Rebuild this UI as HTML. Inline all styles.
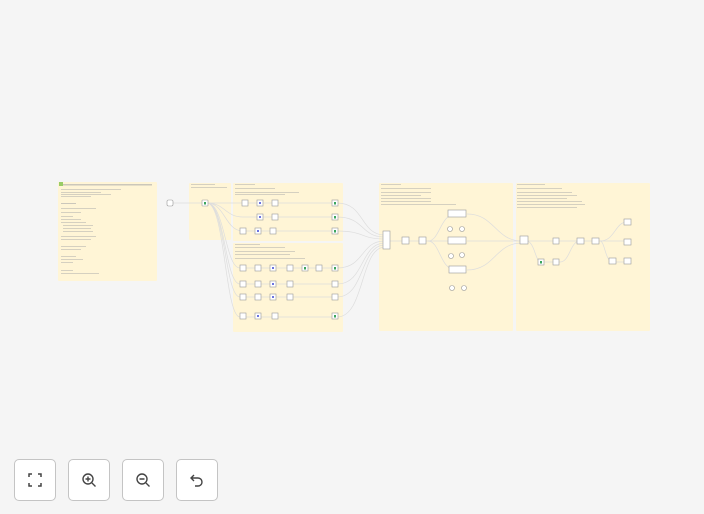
<!DOCTYPE html>
<html><head><style>
html,body{margin:0;padding:0;width:704px;height:514px;overflow:hidden;background:#f5f5f5;font-family:"Liberation Sans",sans-serif}
.btn{position:absolute;top:459px;width:42px;height:42px;border:1px solid #c4c4c4;border-radius:5px;background:#fff;box-sizing:border-box;display:flex;align-items:center;justify-content:center}
</style></head><body>
<svg width="704" height="514" style="position:absolute;left:0;top:0">
<g fill="#fff5d6">
<rect x="58" y="182" width="99" height="99" rx="1"/>
<rect x="189" y="183" width="42" height="57" rx="1"/>
<rect x="233" y="183" width="110" height="58" rx="1"/>
<rect x="233" y="243" width="110" height="89" rx="1"/>
<rect x="379" y="183" width="134" height="148" rx="1"/>
<rect x="516" y="183" width="134" height="148" rx="1"/>
</g>
<g fill="#aaa" opacity=".6">
<rect x="63" y="184" width="89" height="1.5"/>
<rect x="61" y="189" width="60" height=".8"/><rect x="61" y="192" width="40" height=".8"/><rect x="61" y="194" width="50" height=".8"/><rect x="61" y="196" width="30" height=".8"/>
<rect x="61" y="203" width="15" height="1"/><rect x="61" y="208" width="35" height=".8"/>
<rect x="61" y="212" width="20" height=".8"/><rect x="61" y="216" width="12" height=".8"/><rect x="61" y="219" width="20" height=".8"/><rect x="61" y="222" width="25" height=".8"/><rect x="63" y="225" width="30" height=".8"/><rect x="63" y="228" width="28" height=".8"/><rect x="63" y="231" width="30" height=".8"/>
<rect x="61" y="236" width="35" height=".8"/><rect x="61" y="239" width="30" height=".8"/>
<rect x="61" y="246" width="25" height=".8"/><rect x="61" y="249" width="20" height=".8"/>
<rect x="61" y="256" width="15" height=".8"/><rect x="61" y="259" width="22" height=".8"/><rect x="61" y="262" width="12" height=".8"/>
<rect x="61" y="270" width="12" height=".8"/><rect x="61" y="273" width="38" height=".8"/>
<rect x="191" y="184" width="24" height=".8"/><rect x="191" y="187" width="36" height=".8"/>
<rect x="235" y="184" width="20" height=".8"/><rect x="235" y="188" width="40" height=".8"/><rect x="235" y="192" width="64" height=".8"/><rect x="235" y="194" width="50" height=".8"/>
<rect x="235" y="244" width="25" height=".8"/><rect x="235" y="247" width="50" height=".8"/><rect x="235" y="251" width="60" height=".8"/><rect x="235" y="254" width="55" height=".8"/><rect x="235" y="258" width="70" height=".8"/>
<rect x="381" y="184" width="20" height=".8"/><rect x="381" y="188" width="50" height=".8"/><rect x="381" y="192" width="50" height=".8"/><rect x="381" y="195" width="40" height=".8"/><rect x="381" y="198" width="50" height=".8"/><rect x="381" y="201" width="50" height=".8"/><rect x="381" y="204" width="75" height=".8"/>
<rect x="517" y="184" width="28" height=".8"/><rect x="517" y="188" width="45" height=".8"/><rect x="517" y="192" width="55" height=".8"/><rect x="517" y="195" width="60" height=".8"/><rect x="517" y="198" width="50" height=".8"/><rect x="517" y="201" width="65" height=".8"/><rect x="517" y="204" width="68" height=".8"/><rect x="517" y="207" width="60" height=".8"/>
</g>
<g fill="none" stroke="#ddd" stroke-width=".7">
<path d="M173 203H203"/>
<path d="M207 203C225 203 225 203 243 203H333"/>
<path d="M207 203C225 203 225 217 243 217H333"/>
<path d="M207 203C225 203 225 231 243 231H333"/>
<path d="M207 203C225 203 225 268 240 268H333"/>
<path d="M207 203C225 203 225 284 240 284H333"/>
<path d="M207 203C225 203 225 297 240 297H333"/>
<path d="M207 203C225 203 225 317 240 317H333"/>
<path d="M337 203C365 203 360 235 385 235"/><path d="M337 217C365 217 360 237 385 237"/><path d="M337 231C365 231 360 239 385 239"/>
<path d="M337 268C365 268 360 241 385 241"/><path d="M337 284C365 284 360 243 385 243"/><path d="M337 297C365 297 360 245 385 245"/><path d="M337 317C365 317 360 247 385 247"/>
<path d="M390 241H456"/><path d="M428 241C440 241 440 214 456 214"/><path d="M428 241C440 241 440 270 456 270"/>
<path d="M467 214C495 214 495 241 522 241"/><path d="M467 241H522"/><path d="M467 270C495 270 495 243 522 243"/>
<path d="M526 241H627"/><path d="M526 241C535 241 535 262 541 262H560"/><path d="M560 262C570 262 570 241 580 241"/>
<path d="M600 241C615 241 615 222 627 222"/><path d="M600 241C605 241 605 262 613 262H627"/>
</g>
<g fill="#fff" stroke="#999" stroke-width=".6">
<rect x="167" y="200" width="6" height="6" rx="1.5"/>
<rect x="202" y="200" width="6" height="6" rx=".5"/>
<rect x="242" y="200" width="6" height="6"/><rect x="257" y="200" width="6" height="6"/><rect x="272" y="200" width="6" height="6"/><rect x="332" y="200" width="6" height="6"/>
<rect x="257" y="214" width="6" height="6"/><rect x="272" y="214" width="6" height="6"/><rect x="332" y="214" width="6" height="6"/>
<rect x="240" y="228" width="6" height="6"/><rect x="255" y="228" width="6" height="6"/><rect x="270" y="228" width="6" height="6"/><rect x="332" y="228" width="6" height="6"/>
<rect x="240" y="265" width="6" height="6"/><rect x="255" y="265" width="6" height="6"/><rect x="270" y="265" width="6" height="6"/><rect x="287" y="265" width="6" height="6"/><rect x="302" y="265" width="6" height="6"/><rect x="316" y="265" width="6" height="6"/><rect x="332" y="265" width="6" height="6"/>
<rect x="240" y="281" width="6" height="6"/><rect x="255" y="281" width="6" height="6"/><rect x="270" y="281" width="6" height="6"/><rect x="287" y="281" width="6" height="6"/><rect x="332" y="281" width="6" height="6"/>
<rect x="240" y="294" width="6" height="6"/><rect x="255" y="294" width="6" height="6"/><rect x="270" y="294" width="6" height="6"/><rect x="287" y="294" width="6" height="6"/><rect x="332" y="294" width="6" height="6"/>
<rect x="240" y="313" width="6" height="6"/><rect x="255" y="313" width="6" height="6"/><rect x="272" y="313" width="6" height="6"/><rect x="332" y="313" width="6" height="6"/>
<rect x="383" y="231" width="7" height="18"/>
<rect x="402" y="237" width="7" height="7"/><rect x="419" y="237" width="7" height="7"/>
<rect x="448" y="210" width="18" height="7"/><rect x="448" y="237" width="18" height="7"/><rect x="449" y="266" width="17" height="7"/>
<circle cx="450" cy="229" r="2.5"/><circle cx="462" cy="229" r="2.5"/><circle cx="451" cy="256" r="2.5"/><circle cx="462" cy="255" r="2.5"/><circle cx="452" cy="288" r="2.5"/><circle cx="464" cy="288" r="2.5"/>
<rect x="520" y="236" width="8" height="8"/><rect x="553" y="238" width="6" height="6"/><rect x="538" y="259" width="6" height="6"/><rect x="553" y="259" width="6" height="6"/>
<rect x="577" y="238" width="7" height="6"/><rect x="592" y="238" width="7" height="6"/><rect x="609" y="258" width="7" height="6"/>
<rect x="624" y="219" width="7" height="6"/><rect x="624" y="239" width="7" height="6"/><rect x="624" y="258" width="7" height="6"/>
</g>
<g fill="#3aa55d"><rect x="204" y="202" width="2" height="2.5"/><rect x="334" y="202" width="2" height="2.5"/><rect x="334" y="216" width="2" height="2.5"/><rect x="334" y="230" width="2" height="2.5"/><rect x="304" y="267" width="2" height="2.5"/><rect x="334" y="267" width="2" height="2.5"/><rect x="334" y="315" width="2" height="2.5"/><rect x="540" y="261" width="2" height="2.5"/></g>
<g fill="#6b74e0"><rect x="259" y="202" width="2" height="2"/><rect x="259" y="216" width="2" height="2"/><rect x="257" y="230" width="2" height="2"/><rect x="272" y="267" width="2" height="2"/><rect x="272" y="283" width="2" height="2"/><rect x="272" y="296" width="2" height="2"/><rect x="257" y="315" width="2" height="2"/></g>
<rect x="59" y="182" width="4" height="4" fill="#9c6"/>
</svg>
<div class="btn" style="left:14px"><svg width="16" height="16" viewBox="0 0 16 16" fill="none" stroke="#444" stroke-width="1.5"><path d="M2 5V2h3M11 2h3v3M14 11v3h-3M5 14H2v-3"/></svg></div>
<div class="btn" style="left:68px"><svg width="16" height="16" viewBox="0 0 16 16" fill="none" stroke="#444" stroke-width="1.4"><circle cx="7" cy="7" r="5"/><path d="M11 11l3.5 3.5M7 4.5v5M4.5 7h5"/></svg></div>
<div class="btn" style="left:122px"><svg width="16" height="16" viewBox="0 0 16 16" fill="none" stroke="#444" stroke-width="1.4"><circle cx="7" cy="7" r="5"/><path d="M11 11l3.5 3.5M4.5 7h5"/></svg></div>
<div class="btn" style="left:176px"><svg width="16" height="16" viewBox="0 0 16 16" fill="none" stroke="#444" stroke-width="1.4"><path d="M5 3L2 6l3 3M2 6h7a4 4 0 0 1 0 8H6"/></svg></div>
</body></html>
